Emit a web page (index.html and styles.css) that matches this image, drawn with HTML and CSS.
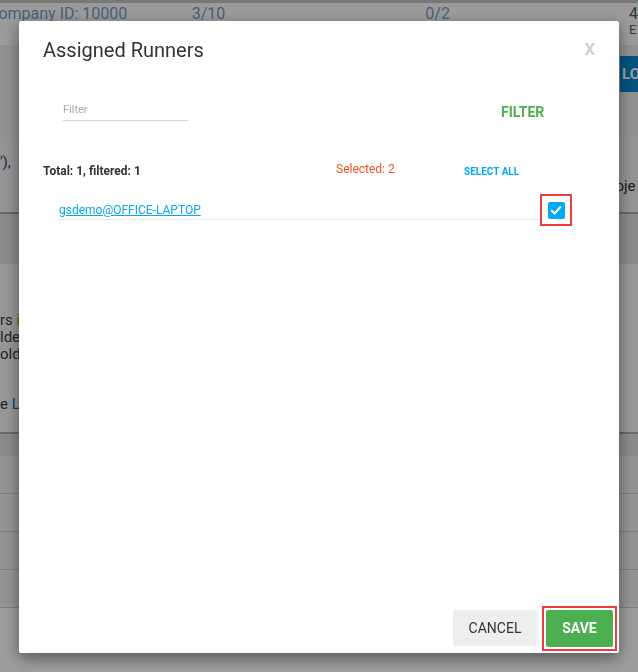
FILE: index.html
```html
<html lang="en">
<head>
    <meta charset="UTF-8">
    <meta name="viewport" content="width=device-width, initial-scale=1.0">
    <title>Assigned Runners</title>
    <link rel="stylesheet" href="styles.css">
</head>
<body>

    <!-- page behind the dialog -->
    <div class="page">
        <div class="topline"></div>
        <div class="stats">
            <span class="stat s1">Company ID: 10000</span>
            <span class="stat s2">3/10</span>
            <span class="stat s3">0/2</span>
            <span class="stat s4">4<small>E</small></span>
        </div>
        <div class="toolbar">
            <span class="btn-blue">LOGS</span>
        </div>
        <div class="card first">
            <span class="left-text">'),</span>
            <span class="right-text">Proje</span>
        </div>
        <div class="band"></div>
        <div class="card second">
            <p>rs <b class="warn">i</b></p>
            <p>lde</p>
            <p>olde</p>
            <p class="gap">e <a>L</a></p>
        </div>
        <div class="band small"></div>
        <div class="rows">
            <div class="prow"></div>
            <div class="prow"></div>
            <div class="prow"></div>
            <div class="prow"></div>
        </div>
    </div>

    <div class="overlay"></div>

    <!-- dialog -->
    <div class="modal">
        <div class="modal-header">
            <h4>Assigned Runners</h4>
            <span class="close">X</span>
        </div>

        <div class="modal-body">
            <div class="filter-row">
                <input type="text" placeholder="Filter" class="filter-input">
                <span class="filter-btn">FILTER</span>
            </div>

            <div class="counts">
                <span class="total">Total: 1, filtered: 1</span>
                <span class="selected">Selected: 2</span>
                <span class="select-all">SELECT ALL</span>
            </div>

            <div class="runner">
                <div class="runner-name"><a href="#">gsdemo@OFFICE-LAPTOP</a></div>
                <div class="runner-check">
                    <span class="check">
                        <svg width="14" height="14" viewBox="0 0 14 14"><path d="M2.2 7.2 L5.6 10.4 L11.8 3.6" fill="none" stroke="#fff" stroke-width="2.2"/></svg>
                    </span>
                </div>
            </div>
        </div>

        <div class="modal-footer">
            <span class="btn cancel">CANCEL</span>
            <span class="mark"><span class="btn save">SAVE</span></span>
        </div>
    </div>

</body>
</html>
```

FILE: styles.css
```css
* {
    box-sizing: border-box;
}

body {
    margin: 0;
    overflow: hidden;
    font-family: Roboto, "Liberation Sans", sans-serif;
    background: #fff;
}

/* background page */
.page {
    width: 638px;
    height: 672px;
    overflow: hidden;
}

.topline {
    height: 3px;
    background: #c4c4c4;
}

.stats {
    height: 42px;
    display: flex;
    color: #73a0cc;
    font-size: 16px;
    background: #fcfcfc;
}

.stat {
    padding-top: 1px;
}

.s1 {
    margin-left: -12px;
    width: 204px;
}

.s2 {
    width: 234px;
}

.s3 {
    width: 204px;
}

.s4 {
    display: flex;
    flex-direction: column;
    color: #5a5a5a;
}

.s4 small {
    font-size: 13px;
    margin-top: -1px;
}

.toolbar {
    height: 92px;
    background: #ececec;
    display: flex;
    justify-content: flex-end;
    padding-top: 11px;
}

.btn-blue {
    background: #0288d1;
    color: #fff;
    font-weight: bold;
    font-size: 15px;
    height: 36px;
    line-height: 36px;
    width: 38px;
    margin-right: -20px;
    padding-left: 2px;
    overflow: hidden;
    white-space: nowrap;
}

.card {
    background: #f2f2f2;
    border-bottom: 2px solid #aaa;
    font-size: 15px;
    color: #333;
}

.card.first {
    height: 77px;
    display: flex;
    justify-content: space-between;
    padding-top: 16px;
}

.left-text {
    color: #2d4f7a;
}

.right-text {
    padding-top: 24px;
    margin-right: -3px;
    width: 40px;
    overflow: hidden;
}

.band {
    height: 50px;
    background: #e2e2e2;
}

.band.small {
    height: 22px;
}

.card.second {
    height: 170px;
    padding-top: 48px;
    background: #f6f6f6;
}

.card.second p {
    margin: 0;
    line-height: 17px;
    color: #3a3a3a;
}

.card.second .gap {
    margin-top: 33px;
}

.warn {
    font-weight: normal;
    color: #d08a00;
}

.card.second a {
    color: #0277bd;
}

.rows {
    background: #ececec;
}

.prow {
    height: 38px;
    border-bottom: 1px solid #d0d0d0;
    background: #f0f0f0;
}

.overlay {
    position: fixed;
    inset: 0;
    background: rgba(0, 0, 0, 0.39);
}

/* dialog */
.modal {
    position: fixed;
    left: 19px;
    top: 21px;
    width: 600px;
    height: 632px;
    background: #fff;
    border-radius: 2px;
    box-shadow: 0 5px 15px rgba(0, 0, 0, 0.45);
    display: flex;
    flex-direction: column;
}

.modal-header {
    display: flex;
    justify-content: space-between;
    padding: 16px 24px 0 24px;
}

.modal-header h4 {
    margin: 0;
    font-size: 20px;
    font-weight: normal;
    line-height: 26px;
    color: #333;
}

.close {
    color: #cfcfcf;
    font-weight: bold;
    font-size: 16px;
    line-height: 22px;
    padding-top: 2px;
}

.modal-body {
    flex: 1;
    padding: 0 24px;
}

.filter-row {
    display: grid;
    grid-template-columns: 458px auto;
    margin-top: 34px;
}

.filter-input {
    margin-left: 20px;
    width: 125px;
    height: 24px;
    border: none;
    border-bottom: 1px solid #d4d4d4;
    padding: 2px 0 0 0;
    font-family: Roboto, "Liberation Sans", sans-serif;
    font-size: 11px;
    outline: none;
}

.filter-input::placeholder {
    color: #a9a9a9;
}

.filter-btn {
    color: #4caf50;
    font-weight: bold;
    font-size: 14px;
    line-height: 30px;
}

.counts {
    display: grid;
    grid-template-columns: 293px 128px auto;
    margin-top: 36px;
    line-height: 16px;
}

.total {
    font-size: 12px;
    font-weight: bold;
    color: #333;
}

.selected {
    font-size: 12px;
    color: #f4511e;
    margin-top: -2px;
}

.select-all {
    font-size: 10px;
    font-weight: bold;
    color: #03a9f4;
    margin-top: 1px;
}

.runner {
    display: flex;
    margin: 14px 23px 0 16px;
}

.runner-name {
    flex: 1;
    padding: 8px 0 1px 0;
    line-height: 16px;
    border-bottom: 1px solid #e6e6e6;
    height: 26px;
}

.runner-name a {
    color: #03a9f4;
    font-size: 12px;
}

.runner-check {
    width: 32px;
    height: 32px;
    border: 2px solid #ee3b3f;
    display: flex;
    align-items: center;
    justify-content: center;
}

.check {
    width: 17px;
    height: 17px;
    border-radius: 2px;
    background: #03a9f4;
    display: flex;
    align-items: center;
    justify-content: center;
}

.modal-footer {
    display: flex;
    justify-content: flex-end;
    align-items: flex-end;
    gap: 5px;
    padding: 0 2px 2px 0;
}

.btn {
    display: block;
    height: 36px;
    line-height: 36px;
    font-size: 14px;
    text-align: center;
    border-radius: 2px;
}

.cancel {
    width: 84px;
    background: #eeeeee;
    color: #333;
    margin-bottom: 5px;
}

.mark {
    border: 2px solid #ee3b3f;
    padding: 2px;
}

.save {
    width: 67px;
    height: 37px;
    line-height: 37px;
    background: #4caf50;
    color: #fff;
    font-weight: bold;
}
```
